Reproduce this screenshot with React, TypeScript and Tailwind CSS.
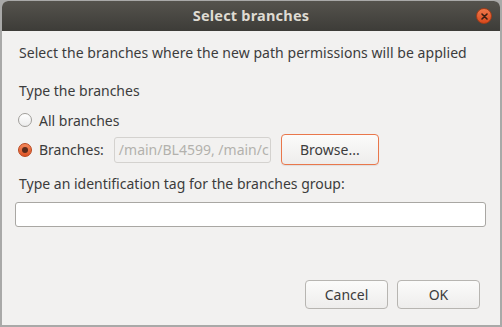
export default function App() {
  const font = { fontFamily: '"Noto Sans", "Open Sans", sans-serif' };
  return (
    <div
      className="w-[502px] h-[327px] bg-[#a9a9a8] pt-[1px] pl-[2px] pr-[2px] pb-[2px] overflow-hidden"
      style={font}
    >
      <div className="w-full h-full flex flex-col rounded-t-[6px] overflow-hidden bg-[#f2f1f0]">
        {/* title bar */}
        <div className="relative h-[30px] shrink-0 flex items-center justify-center bg-gradient-to-b from-[#55534d] to-[#3d3c38]">
          <span className="text-[14.5px] font-bold text-[#dfdbd2] tracking-[0.2px]">
            Select branches
          </span>
          <div className="absolute right-[8px] top-[7px] w-[16px] h-[16px] rounded-full bg-gradient-to-b from-[#f0784a] to-[#d9481b] border border-[#a33c17] flex items-center justify-center">
            <svg width="7" height="7" viewBox="0 0 7 7">
              <path d="M1 1L6 6M6 1L1 6" stroke="#3b1e12" strokeWidth="1.6" strokeLinecap="round" />
            </svg>
          </div>
        </div>

        {/* body */}
        <div className="flex-1 flex flex-col px-[13px] pt-[11px] text-[14px] text-[#3c3c3c]">
          <div className="pl-[4px] h-[22px] leading-[22px] tracking-[0.05px]">
            Select the branches where the new path permissions will be applied
          </div>

          <div className="pl-[4px] mt-[16px] h-[22px] leading-[22px]">Type the branches</div>

          <div className="flex items-center mt-[7px] h-[22px] pl-[3px]">
            <span className="w-[14px] h-[14px] rounded-full bg-gradient-to-b from-white to-[#ececec] border border-[#a09e9a]" />
            <span className="ml-[7px]">All branches</span>
          </div>

          <div className="flex items-center mt-[3px] pl-[3px]">
            <span className="w-[14px] h-[14px] rounded-full bg-gradient-to-b from-[#f4875a] to-[#de5424] border border-[#b9471e] flex items-center justify-center">
              <span className="w-[6px] h-[6px] rounded-full bg-[#5a2a1a]" />
            </span>
            <span className="ml-[7px]">Branches:</span>
            <div className="ml-[10px] w-[157px] h-[26px] rounded-[3px] border border-[#d4d2cf] bg-[#f2f1f0] overflow-hidden whitespace-nowrap pl-[4px] leading-[24px] text-[#b3b1ad]">
              /main/BL4599, /main/c
            </div>
            <button className="ml-[10px] w-[98px] h-[31px] rounded-[4px] border border-[#e9774b] bg-gradient-to-b from-[#fbfbfa] to-[#eeedec] text-[#3c3c3c] shadow-[0_1px_1px_rgba(0,0,0,0.08)]">
              Browse...
            </button>
          </div>

          <div className="pl-[4px] mt-[8px] h-[22px] leading-[22px]">
            Type an identification tag for the branches group:
          </div>

          <div className="mt-[7px] h-[25px] w-[471px] rounded-[3px] border border-[#a9a7a3] bg-white" />

          <div className="flex-1" />

          <div className="flex justify-end gap-[9px] pb-[16px] pr-[7px]">
            <button className="w-[83px] h-[29px] rounded-[4px] border border-[#b7b5b1] bg-gradient-to-b from-[#fbfbfa] to-[#eeedec] text-[#3c3c3c]">
              Cancel
            </button>
            <button className="w-[83px] h-[29px] rounded-[4px] border border-[#b7b5b1] bg-gradient-to-b from-[#fbfbfa] to-[#eeedec] text-[#3c3c3c]">
              OK
            </button>
          </div>
        </div>
      </div>
    </div>
  );
}
